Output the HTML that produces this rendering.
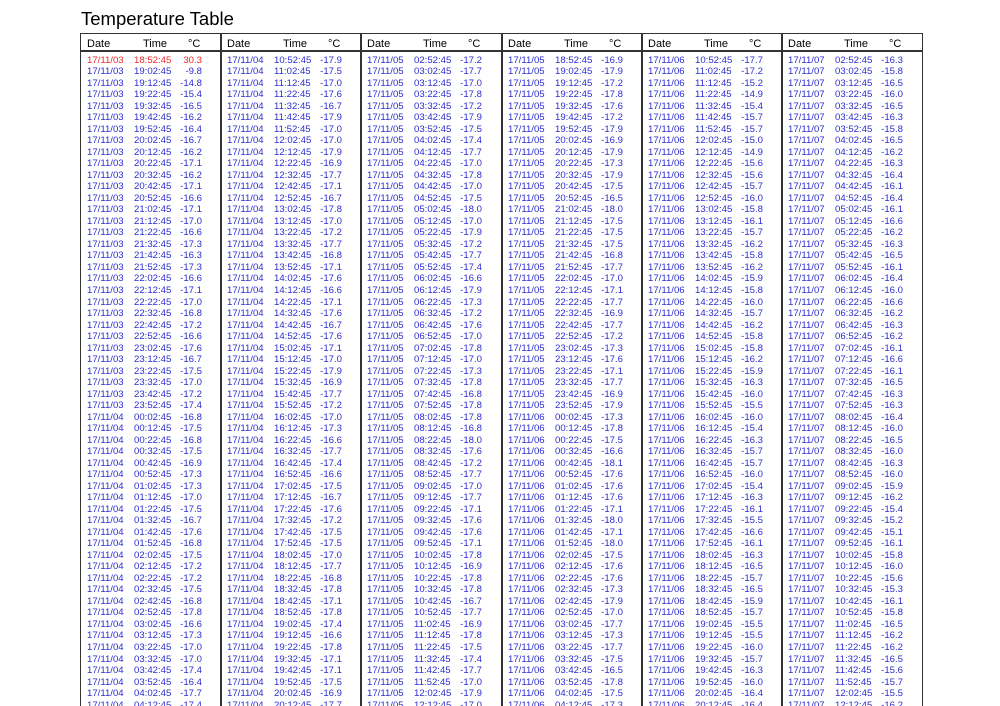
<!DOCTYPE html>
<html><head><meta charset="utf-8">
<style>
html,body{margin:0;padding:0;background:#fff;width:1000px;height:706px;overflow:hidden;font-family:"Liberation Sans",sans-serif;position:relative;}
.title{position:absolute;left:81px;top:8px;font-size:18.5px;color:#000;line-height:22px;}
.tbl{position:absolute;left:80px;top:33px;width:841px;height:673px;border:1.5px solid #333;border-bottom:none;box-sizing:content-box;}
.hl{position:absolute;left:80px;top:50px;width:843px;height:1.5px;background:#333;}
.vl{position:absolute;top:33px;width:1.5px;height:673px;background:#333;}
.col{position:absolute;top:0;width:140px;height:706px;overflow:hidden;}
.h{position:absolute;top:37px;font-size:11px;line-height:14px;color:#000;}
.d,.t,.c{position:absolute;top:54.7px;font-size:9.6px;line-height:11.52px;white-space:pre;color:#2c2cd2;}
.d{left:6px;}.t{left:53px;}.c{right:19px;text-align:right;}
.r{color:#f02828;}
</style></head><body>
<div class="title">Temperature Table</div>
<div class="tbl"></div>
<div class="hl"></div>
<div class="vl" style="left:220px"></div>
<div class="vl" style="left:360px"></div>
<div class="vl" style="left:501px"></div>
<div class="vl" style="left:641px"></div>
<div class="vl" style="left:781px"></div>

<div class="col" style="left:81px">
<div class="h" style="left:6px">Date</div><div class="h" style="left:62px">Time</div><div class="h" style="left:107px">°C</div>
<div class="d"><span class="r">17/11/03</span>
17/11/03
17/11/03
17/11/03
17/11/03
17/11/03
17/11/03
17/11/03
17/11/03
17/11/03
17/11/03
17/11/03
17/11/03
17/11/03
17/11/03
17/11/03
17/11/03
17/11/03
17/11/03
17/11/03
17/11/03
17/11/03
17/11/03
17/11/03
17/11/03
17/11/03
17/11/03
17/11/03
17/11/03
17/11/03
17/11/03
17/11/04
17/11/04
17/11/04
17/11/04
17/11/04
17/11/04
17/11/04
17/11/04
17/11/04
17/11/04
17/11/04
17/11/04
17/11/04
17/11/04
17/11/04
17/11/04
17/11/04
17/11/04
17/11/04
17/11/04
17/11/04
17/11/04
17/11/04
17/11/04
17/11/04
17/11/04</div>
<div class="t"><span class="r">18:52:45</span>
19:02:45
19:12:45
19:22:45
19:32:45
19:42:45
19:52:45
20:02:45
20:12:45
20:22:45
20:32:45
20:42:45
20:52:45
21:02:45
21:12:45
21:22:45
21:32:45
21:42:45
21:52:45
22:02:45
22:12:45
22:22:45
22:32:45
22:42:45
22:52:45
23:02:45
23:12:45
23:22:45
23:32:45
23:42:45
23:52:45
00:02:45
00:12:45
00:22:45
00:32:45
00:42:45
00:52:45
01:02:45
01:12:45
01:22:45
01:32:45
01:42:45
01:52:45
02:02:45
02:12:45
02:22:45
02:32:45
02:42:45
02:52:45
03:02:45
03:12:45
03:22:45
03:32:45
03:42:45
03:52:45
04:02:45
04:12:45</div>
<div class="c"><span class="r">30.3</span>
-9.8
-14.8
-15.4
-16.5
-16.2
-16.4
-16.7
-16.2
-17.1
-16.2
-17.1
-16.6
-17.1
-17.0
-16.6
-17.3
-16.3
-17.3
-16.6
-17.1
-17.0
-16.8
-17.2
-16.6
-17.6
-16.7
-17.5
-17.0
-17.2
-17.4
-16.8
-17.5
-16.8
-17.5
-16.9
-17.3
-17.3
-17.0
-17.5
-16.7
-17.6
-16.8
-17.5
-17.2
-17.2
-17.5
-16.8
-17.8
-16.6
-17.3
-17.0
-17.0
-17.4
-16.4
-17.7
-17.4</div>
</div>

<div class="col" style="left:221px">
<div class="h" style="left:6px">Date</div><div class="h" style="left:62px">Time</div><div class="h" style="left:107px">°C</div>
<div class="d">17/11/04
17/11/04
17/11/04
17/11/04
17/11/04
17/11/04
17/11/04
17/11/04
17/11/04
17/11/04
17/11/04
17/11/04
17/11/04
17/11/04
17/11/04
17/11/04
17/11/04
17/11/04
17/11/04
17/11/04
17/11/04
17/11/04
17/11/04
17/11/04
17/11/04
17/11/04
17/11/04
17/11/04
17/11/04
17/11/04
17/11/04
17/11/04
17/11/04
17/11/04
17/11/04
17/11/04
17/11/04
17/11/04
17/11/04
17/11/04
17/11/04
17/11/04
17/11/04
17/11/04
17/11/04
17/11/04
17/11/04
17/11/04
17/11/04
17/11/04
17/11/04
17/11/04
17/11/04
17/11/04
17/11/04
17/11/04
17/11/04</div>
<div class="t">10:52:45
11:02:45
11:12:45
11:22:45
11:32:45
11:42:45
11:52:45
12:02:45
12:12:45
12:22:45
12:32:45
12:42:45
12:52:45
13:02:45
13:12:45
13:22:45
13:32:45
13:42:45
13:52:45
14:02:45
14:12:45
14:22:45
14:32:45
14:42:45
14:52:45
15:02:45
15:12:45
15:22:45
15:32:45
15:42:45
15:52:45
16:02:45
16:12:45
16:22:45
16:32:45
16:42:45
16:52:45
17:02:45
17:12:45
17:22:45
17:32:45
17:42:45
17:52:45
18:02:45
18:12:45
18:22:45
18:32:45
18:42:45
18:52:45
19:02:45
19:12:45
19:22:45
19:32:45
19:42:45
19:52:45
20:02:45
20:12:45</div>
<div class="c">-17.9
-17.5
-17.0
-17.6
-16.7
-17.9
-17.0
-17.0
-17.9
-16.9
-17.7
-17.1
-16.7
-17.8
-17.0
-17.2
-17.7
-16.8
-17.1
-17.6
-16.6
-17.1
-17.6
-16.7
-17.6
-17.1
-17.0
-17.9
-16.9
-17.7
-17.2
-17.0
-17.3
-16.6
-17.7
-17.4
-16.6
-17.5
-16.7
-17.6
-17.2
-17.5
-17.5
-17.0
-17.7
-16.8
-17.8
-17.1
-17.8
-17.4
-16.6
-17.8
-17.1
-17.1
-17.5
-16.9
-17.7</div>
</div>

<div class="col" style="left:361px">
<div class="h" style="left:6px">Date</div><div class="h" style="left:62px">Time</div><div class="h" style="left:107px">°C</div>
<div class="d">17/11/05
17/11/05
17/11/05
17/11/05
17/11/05
17/11/05
17/11/05
17/11/05
17/11/05
17/11/05
17/11/05
17/11/05
17/11/05
17/11/05
17/11/05
17/11/05
17/11/05
17/11/05
17/11/05
17/11/05
17/11/05
17/11/05
17/11/05
17/11/05
17/11/05
17/11/05
17/11/05
17/11/05
17/11/05
17/11/05
17/11/05
17/11/05
17/11/05
17/11/05
17/11/05
17/11/05
17/11/05
17/11/05
17/11/05
17/11/05
17/11/05
17/11/05
17/11/05
17/11/05
17/11/05
17/11/05
17/11/05
17/11/05
17/11/05
17/11/05
17/11/05
17/11/05
17/11/05
17/11/05
17/11/05
17/11/05
17/11/05</div>
<div class="t">02:52:45
03:02:45
03:12:45
03:22:45
03:32:45
03:42:45
03:52:45
04:02:45
04:12:45
04:22:45
04:32:45
04:42:45
04:52:45
05:02:45
05:12:45
05:22:45
05:32:45
05:42:45
05:52:45
06:02:45
06:12:45
06:22:45
06:32:45
06:42:45
06:52:45
07:02:45
07:12:45
07:22:45
07:32:45
07:42:45
07:52:45
08:02:45
08:12:45
08:22:45
08:32:45
08:42:45
08:52:45
09:02:45
09:12:45
09:22:45
09:32:45
09:42:45
09:52:45
10:02:45
10:12:45
10:22:45
10:32:45
10:42:45
10:52:45
11:02:45
11:12:45
11:22:45
11:32:45
11:42:45
11:52:45
12:02:45
12:12:45</div>
<div class="c">-17.2
-17.7
-17.0
-17.8
-17.2
-17.9
-17.5
-17.4
-17.7
-17.0
-17.8
-17.0
-17.5
-18.0
-17.0
-17.9
-17.2
-17.7
-17.4
-16.6
-17.9
-17.3
-17.2
-17.6
-17.0
-17.8
-17.0
-17.3
-17.8
-16.8
-17.8
-17.8
-16.8
-18.0
-17.6
-17.2
-17.7
-17.0
-17.7
-17.1
-17.6
-17.6
-17.1
-17.8
-16.9
-17.8
-17.8
-16.7
-17.7
-16.9
-17.8
-17.5
-17.4
-17.7
-17.0
-17.9
-17.0</div>
</div>

<div class="col" style="left:502px">
<div class="h" style="left:6px">Date</div><div class="h" style="left:62px">Time</div><div class="h" style="left:107px">°C</div>
<div class="d">17/11/05
17/11/05
17/11/05
17/11/05
17/11/05
17/11/05
17/11/05
17/11/05
17/11/05
17/11/05
17/11/05
17/11/05
17/11/05
17/11/05
17/11/05
17/11/05
17/11/05
17/11/05
17/11/05
17/11/05
17/11/05
17/11/05
17/11/05
17/11/05
17/11/05
17/11/05
17/11/05
17/11/05
17/11/05
17/11/05
17/11/05
17/11/06
17/11/06
17/11/06
17/11/06
17/11/06
17/11/06
17/11/06
17/11/06
17/11/06
17/11/06
17/11/06
17/11/06
17/11/06
17/11/06
17/11/06
17/11/06
17/11/06
17/11/06
17/11/06
17/11/06
17/11/06
17/11/06
17/11/06
17/11/06
17/11/06
17/11/06</div>
<div class="t">18:52:45
19:02:45
19:12:45
19:22:45
19:32:45
19:42:45
19:52:45
20:02:45
20:12:45
20:22:45
20:32:45
20:42:45
20:52:45
21:02:45
21:12:45
21:22:45
21:32:45
21:42:45
21:52:45
22:02:45
22:12:45
22:22:45
22:32:45
22:42:45
22:52:45
23:02:45
23:12:45
23:22:45
23:32:45
23:42:45
23:52:45
00:02:45
00:12:45
00:22:45
00:32:45
00:42:45
00:52:45
01:02:45
01:12:45
01:22:45
01:32:45
01:42:45
01:52:45
02:02:45
02:12:45
02:22:45
02:32:45
02:42:45
02:52:45
03:02:45
03:12:45
03:22:45
03:32:45
03:42:45
03:52:45
04:02:45
04:12:45</div>
<div class="c">-16.9
-17.9
-17.2
-17.8
-17.6
-17.2
-17.9
-16.9
-17.9
-17.3
-17.9
-17.5
-16.5
-18.0
-17.5
-17.5
-17.5
-16.8
-17.7
-17.0
-17.1
-17.7
-16.9
-17.7
-17.2
-17.3
-17.6
-17.1
-17.7
-16.9
-17.9
-17.3
-17.8
-17.5
-16.6
-18.1
-17.6
-17.6
-17.6
-17.1
-18.0
-17.1
-18.0
-17.5
-17.6
-17.6
-17.3
-17.9
-17.0
-17.7
-17.3
-17.7
-17.5
-16.5
-17.8
-17.5
-17.3</div>
</div>

<div class="col" style="left:642px">
<div class="h" style="left:6px">Date</div><div class="h" style="left:62px">Time</div><div class="h" style="left:107px">°C</div>
<div class="d">17/11/06
17/11/06
17/11/06
17/11/06
17/11/06
17/11/06
17/11/06
17/11/06
17/11/06
17/11/06
17/11/06
17/11/06
17/11/06
17/11/06
17/11/06
17/11/06
17/11/06
17/11/06
17/11/06
17/11/06
17/11/06
17/11/06
17/11/06
17/11/06
17/11/06
17/11/06
17/11/06
17/11/06
17/11/06
17/11/06
17/11/06
17/11/06
17/11/06
17/11/06
17/11/06
17/11/06
17/11/06
17/11/06
17/11/06
17/11/06
17/11/06
17/11/06
17/11/06
17/11/06
17/11/06
17/11/06
17/11/06
17/11/06
17/11/06
17/11/06
17/11/06
17/11/06
17/11/06
17/11/06
17/11/06
17/11/06
17/11/06</div>
<div class="t">10:52:45
11:02:45
11:12:45
11:22:45
11:32:45
11:42:45
11:52:45
12:02:45
12:12:45
12:22:45
12:32:45
12:42:45
12:52:45
13:02:45
13:12:45
13:22:45
13:32:45
13:42:45
13:52:45
14:02:45
14:12:45
14:22:45
14:32:45
14:42:45
14:52:45
15:02:45
15:12:45
15:22:45
15:32:45
15:42:45
15:52:45
16:02:45
16:12:45
16:22:45
16:32:45
16:42:45
16:52:45
17:02:45
17:12:45
17:22:45
17:32:45
17:42:45
17:52:45
18:02:45
18:12:45
18:22:45
18:32:45
18:42:45
18:52:45
19:02:45
19:12:45
19:22:45
19:32:45
19:42:45
19:52:45
20:02:45
20:12:45</div>
<div class="c">-17.7
-17.2
-15.2
-14.9
-15.4
-15.7
-15.7
-15.0
-14.9
-15.6
-15.6
-15.7
-16.0
-15.8
-16.1
-15.7
-16.2
-15.8
-16.2
-15.9
-15.8
-16.0
-15.7
-16.2
-15.8
-15.8
-16.2
-15.9
-16.3
-16.0
-15.5
-16.0
-15.4
-16.3
-15.7
-15.7
-16.0
-15.4
-16.3
-16.1
-15.5
-16.6
-16.1
-16.3
-16.5
-15.7
-16.5
-15.9
-15.7
-15.5
-15.5
-16.0
-15.7
-16.3
-16.0
-16.4
-16.4</div>
</div>

<div class="col" style="left:782px">
<div class="h" style="left:6px">Date</div><div class="h" style="left:62px">Time</div><div class="h" style="left:107px">°C</div>
<div class="d">17/11/07
17/11/07
17/11/07
17/11/07
17/11/07
17/11/07
17/11/07
17/11/07
17/11/07
17/11/07
17/11/07
17/11/07
17/11/07
17/11/07
17/11/07
17/11/07
17/11/07
17/11/07
17/11/07
17/11/07
17/11/07
17/11/07
17/11/07
17/11/07
17/11/07
17/11/07
17/11/07
17/11/07
17/11/07
17/11/07
17/11/07
17/11/07
17/11/07
17/11/07
17/11/07
17/11/07
17/11/07
17/11/07
17/11/07
17/11/07
17/11/07
17/11/07
17/11/07
17/11/07
17/11/07
17/11/07
17/11/07
17/11/07
17/11/07
17/11/07
17/11/07
17/11/07
17/11/07
17/11/07
17/11/07
17/11/07
17/11/07</div>
<div class="t">02:52:45
03:02:45
03:12:45
03:22:45
03:32:45
03:42:45
03:52:45
04:02:45
04:12:45
04:22:45
04:32:45
04:42:45
04:52:45
05:02:45
05:12:45
05:22:45
05:32:45
05:42:45
05:52:45
06:02:45
06:12:45
06:22:45
06:32:45
06:42:45
06:52:45
07:02:45
07:12:45
07:22:45
07:32:45
07:42:45
07:52:45
08:02:45
08:12:45
08:22:45
08:32:45
08:42:45
08:52:45
09:02:45
09:12:45
09:22:45
09:32:45
09:42:45
09:52:45
10:02:45
10:12:45
10:22:45
10:32:45
10:42:45
10:52:45
11:02:45
11:12:45
11:22:45
11:32:45
11:42:45
11:52:45
12:02:45
12:12:45</div>
<div class="c">-16.3
-15.8
-16.5
-16.0
-16.5
-16.3
-15.8
-16.5
-16.2
-16.3
-16.4
-16.1
-16.4
-16.1
-16.6
-16.2
-16.3
-16.5
-16.1
-16.4
-16.0
-16.6
-16.2
-16.3
-16.2
-16.1
-16.6
-16.1
-16.5
-16.3
-16.3
-16.4
-16.0
-16.5
-16.0
-16.3
-16.0
-15.9
-16.2
-15.4
-15.2
-15.1
-16.1
-15.8
-16.0
-15.6
-15.3
-16.1
-15.8
-16.5
-16.2
-16.2
-16.5
-15.6
-15.7
-15.5
-16.2</div>
</div>
</body></html>
